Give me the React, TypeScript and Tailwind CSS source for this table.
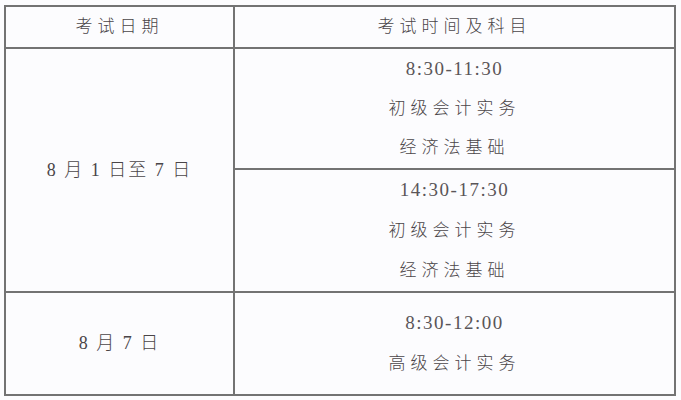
const CJK = "font-['Liberation_Serif','Noto_Sans_CJK_SC',serif]";

function Line({ children, wide }: { children: React.ReactNode; wide?: boolean }) {
  return (
    <div
      className={`h-[40px] flex items-center justify-center font-light ${
        wide ? "text-[19px] tracking-[1.5px] text-[#5a5558]" : "text-[17px] tracking-[5px]"
      }`}
    >
      {children}
    </div>
  );
}

export default function App() {
  return (
    <div className={`w-[681px] h-[400px] bg-[#fcfcfe] pt-[5px] pl-[4px] text-[#4a4548] ${CJK}`}>
      <div className="w-[672px] border-2 border-[#737373] grid grid-cols-[229px_1fr]">
        {/* header */}
        <div className="h-[42px] flex items-center justify-center text-[17px] font-light tracking-[5px] border-r-2 border-b-2 border-[#737373]">
          考试日期
        </div>
        <div className="h-[42px] flex items-center justify-center text-[17px] font-light tracking-[5px] border-b-2 border-[#737373]">
          考试时间及科目
        </div>

        {/* row 1 */}
        <div className="h-[244px] flex items-center justify-center text-[18px] font-light tracking-[2px] border-r-2 border-b-2 border-[#737373] whitespace-pre">
          8 月 1 日至 7 日
        </div>
        <div className="flex flex-col border-b-2 border-[#737373]">
          <div className="h-[121px] flex flex-col justify-center border-b-2 border-[#737373]">
            <Line wide>8:30-11:30</Line>
            <Line>初级会计实务</Line>
            <Line>经济法基础</Line>
          </div>
          <div className="h-[121px] flex flex-col justify-center">
            <Line wide>14:30-17:30</Line>
            <Line>初级会计实务</Line>
            <Line>经济法基础</Line>
          </div>
        </div>

        {/* row 2 */}
        <div className="h-[101px] flex items-center justify-center text-[18px] font-light tracking-[2px] border-r-2 border-[#737373] whitespace-pre">
          8 月 7 日
        </div>
        <div className="h-[101px] flex flex-col justify-center">
          <Line wide>8:30-12:00</Line>
          <Line>高级会计实务</Line>
        </div>
      </div>
    </div>
  );
}
